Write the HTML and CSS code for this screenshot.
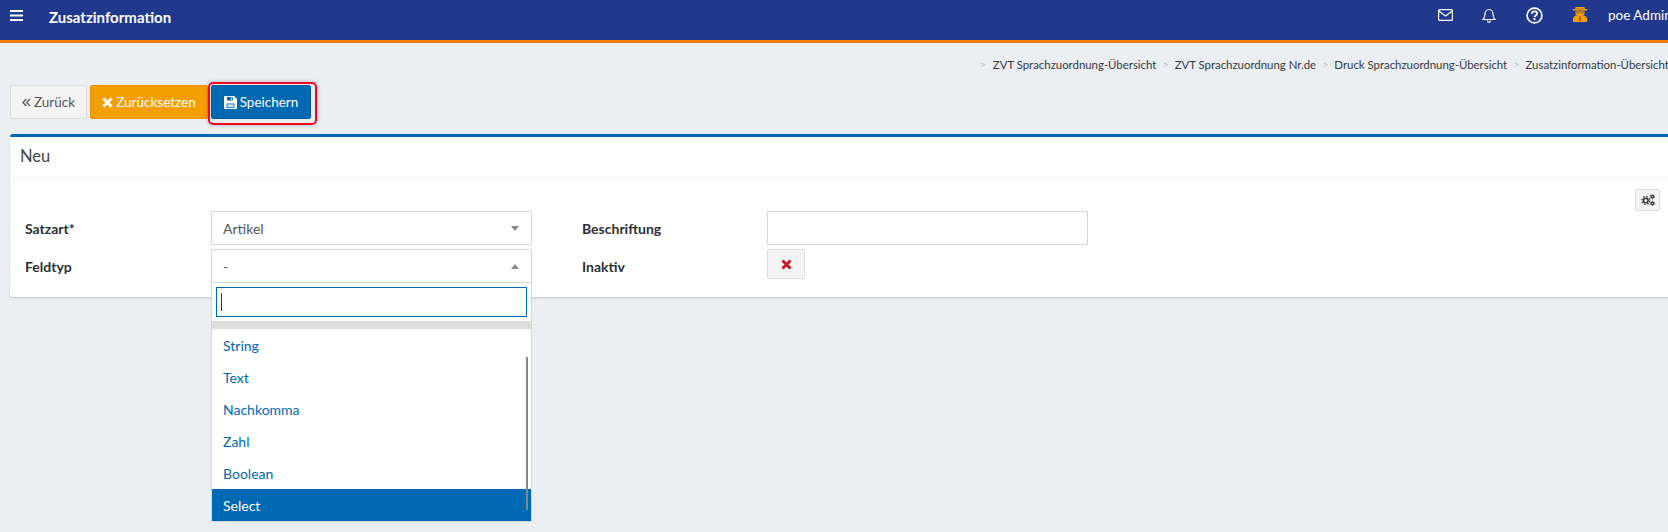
FILE: index.html
```html
<!DOCTYPE html>
<html lang="de">
<head>
    <meta charset="UTF-8">
    <title>Zusatzinformation</title>
    <link rel="stylesheet" href="styles.css">
</head>
<body>
    <div class="topbar">
        <svg class="menu-icon" width="13" height="11" viewBox="0 0 13 11"><path d="M0 0h13v2H0zM0 4.500h13v2H0zM0 9h13v2H0z" fill="#fff"/></svg>
        <span class="page-title">Zusatzinformation</span>
        <div class="topbar-right">
            <svg width="15" height="12" viewBox="0 0 15 12" fill="none" stroke="#fff" stroke-width="1.200"><rect x="0.600" y="0.600" width="13.800" height="10.800" rx="1"/><path d="M0.800 2l6.700 5 6.700-5"/></svg>
            <svg class="icon-bell" width="14" height="15" viewBox="0 0 14 15" fill="none" stroke="#fff" stroke-width="1.200"><path d="M1 11.500c1.500-1.500 2-3 2-5.500 0-2.500 1.700-4.500 4-4.500s4 2 4 4.500c0 2.500.5 4 2 5.500z"/><path d="M5.500 12.500c0 1 .7 1.800 1.500 1.800s1.500-.8 1.500-1.800" /></svg>
            <svg class="icon-help" width="17" height="17" viewBox="0 0 17 17" fill="none" stroke="#fff"><circle cx="8.500" cy="8.500" r="7.400" stroke-width="1.700"/><path d="M5.900 6.700c0-1.500 1.200-2.300 2.600-2.300s2.600.9 2.600 2.200c0 2-2.600 1.900-2.600 3.700" stroke-width="1.800"/><path d="M8.500 11.200v2" stroke-width="2"/></svg>
            <svg class="icon-spy" width="16" height="19" viewBox="0 0 16 19" fill="#f59e00"><path d="M4.500 .5c1.200.6 2.300.8 3.500.8s2.300-.2 3.500-.8l1.300 5.300H3.200z"/><path d="M1 6h14v1.500H1z"/><path d="M3.500 8.200h9v2.300c0 1.200-1 2.100-2.100 2.500H5.600c-1.100-.4-2.100-1.300-2.100-2.500z"/><path d="M4.400 9h3v1.600h-3zM8.600 9h3v1.600h-3z" fill="#a86a00"/><path d="M1 19v-3c0-1.800 1-3 3-3.400h8c2 .4 3 1.600 3 3.400v3z"/><path d="M7.300 13h1.400l.6 4-1.300 2-1.300-2z" fill="#a86a00"/></svg>
            <span class="user-name">poe Admin</span>
        </div>
    </div>

    <div class="breadcrumb">
        <span class="sep">&gt;</span><span class="crumb">ZVT Sprachzuordnung-Übersicht</span>
        <span class="sep">&gt;</span><span class="crumb">ZVT Sprachzuordnung Nr.de</span>
        <span class="sep">&gt;</span><span class="crumb">Druck Sprachzuordnung-Übersicht</span>
        <span class="sep">&gt;</span><span class="crumb">Zusatzinformation-Übersicht</span>
    </div>

    <div class="actions">
        <button class="btn btn-back">
            <svg width="9" height="9" viewBox="0 0 9 9" fill="none" stroke="#555" stroke-width="1.300"><path d="M4.300 1L1 4.500 4.300 8M8 1L4.700 4.500 8 8"/></svg>
            Zurück
        </button>
        <button class="btn btn-reset">
            <svg width="11" height="11" viewBox="0 0 11 11" fill="none" stroke="#fff" stroke-width="3"><path d="M1.500 1.500l8 8M9.500 1.500l-8 8"/></svg>
            Zurücksetzen
        </button>
        <div class="highlight-wrap">
            <button class="btn btn-save">
                <svg width="13" height="13" viewBox="0 0 13 13"><path d="M1 0h9l3 3v9a1 1 0 0 1-1 1H1a1 1 0 0 1-1-1V1a1 1 0 0 1 1-1z" fill="#fff"/><path d="M3 1h6v3.500H3z" fill="#0069b4"/><path d="M7 1.500h1.300v2.300H7z" fill="#fff"/><path d="M2.500 7.500h8V12h-8z" fill="#0069b4"/><path d="M3.300 8.300h6.400v3H3.300z" fill="#cfe0ee"/></svg>
                Speichern
            </button>
            <span class="highlight"></span>
        </div>
    </div>

    <div class="card">
        <div class="card-head">Neu</div>
        <div class="card-body">
            <div class="tools">
                <button class="btn-gear">
                    <svg width="14" height="12" viewBox="0 0 14 12" fill="none" stroke="#333"><circle cx="4.800" cy="6.500" r="2.300" stroke-width="1.500"/><circle cx="4.800" cy="6.500" r="3.900" stroke-width="1.300" stroke-dasharray="1.500 1.560"/><circle cx="11.300" cy="2.600" r="1.300" stroke-width="1.300"/><circle cx="11.300" cy="9.400" r="1.300" stroke-width="1.300"/><circle cx="11.300" cy="2.600" r="2.300" stroke-width=".8" stroke-dasharray="1 1.400"/><circle cx="11.300" cy="9.400" r="2.300" stroke-width=".8" stroke-dasharray="1 1.400"/></svg>
                </button>
            </div>
            <div class="form-row">
                <label class="field-label">Satzart*</label>
                <div class="select-box">
                    <span>Artikel</span>
                    <span class="arrow-down"></span>
                </div>
                <label class="field-label second">Beschriftung</label>
                <input class="text-input" type="text">
            </div>
            <div class="form-row">
                <label class="field-label">Feldtyp</label>
                <div class="select-box open">
                    <span>-</span>
                    <span class="arrow-up"></span>
                    <div class="dropdown">
                        <div class="search-wrap"><div class="search-input"><span class="caret"></span></div></div>
                        <ul class="options">
                            <li class="placeholder"></li>
                            <li>String</li>
                            <li>Text</li>
                            <li>Nachkomma</li>
                            <li>Zahl</li>
                            <li>Boolean</li>
                            <li class="selected">Select</li>
                        </ul>
                        <span class="scrollbar"></span>
                    </div>
                </div>
                <label class="field-label second">Inaktiv</label>
                <button class="btn-toggle">
                    <svg width="11" height="11" viewBox="0 0 11 11" fill="none" stroke="#c01c28" stroke-width="3"><path d="M1.500 1.500l8 8M9.500 1.500l-8 8"/></svg>
                </button>
            </div>
        </div>
    </div>
</body>
</html>
```

FILE: styles.css
```css
* {
    margin: 0;
    padding: 0;
    box-sizing: border-box;
}

html, body {
    height: 100%;
    overflow: hidden;
}

body {
    font-family: Lato, sans-serif;
    font-size: 14px;
    color: #343a40;
    background: #ebeef3;
    width: 1668px;
}

svg {
    flex-shrink: 0;
}

.topbar {
    height: 43px;
    background: #20398d;
    border-bottom: 3px solid #ef7d00;
    display: flex;
    align-items: center;
    padding-left: 10px;
    color: #fff;
}

.menu-icon {
    margin-right: 26px;
    margin-top: -10px;
}

.page-title {
    font-weight: 700;
    font-size: 15px;
    margin-top: -7px;
}

.topbar-right {
    margin-left: auto;
    display: flex;
    align-items: center;
    width: 230px;
    margin-top: -10px;
    overflow: hidden;
    flex-shrink: 0;
}

.icon-bell {
    margin-left: 29px;
}

.icon-help {
    margin-left: 30px;
}

.icon-spy {
    margin-left: 29px;
    margin-top: -6px;
}

.user-name {
    margin-left: 20px;
    white-space: nowrap;
    font-size: 13.500px;
}

.breadcrumb {
    display: flex;
    align-items: center;
    height: 42px;
    padding-left: 980px;
    font-size: 11.400px;
    white-space: nowrap;
    overflow: hidden;
    color: #343a40;
}

.crumb {
    flex-shrink: 0;
}

.sep {
    color: #bbb;
    font-size: 10px;
    margin-right: 6px;
    margin-left: 6.500px;
}

.sep:first-child {
    margin-left: 0;
    margin-right: 7px;
}

.actions {
    display: flex;
    padding-left: 10px;
    gap: 3px;
    height: 34px;
}

.btn {
    display: flex;
    align-items: center;
    justify-content: center;
    gap: 3px;
    height: 34px;
    font-family: inherit;
    font-size: 13.500px;
    border-radius: 2px;
    border: 1px solid #ddd;
}

.btn-back {
    width: 77px;
    background: #f4f4f4;
    color: #555;
}

.btn-reset {
    width: 118px;
    background: #f59e00;
    border-color: #e79500;
    color: #fff;
}

.btn-save {
    width: 100px;
    background: #0069b4;
    border-color: #005a9c;
    color: #fff;
}

.highlight-wrap {
    position: relative;
}

.highlight {
    position: absolute;
    left: -3px;
    right: -6px;
    top: -3px;
    bottom: -6px;
    border: 2px solid #ee0a1f;
    border-radius: 5px;
    box-shadow: 0 0 4px rgba(0, 0, 0, 0.25);
}

.card {
    margin: 15px -20px 0 10px;
    height: 163px;
    background: #fff;
    border-top: 3px solid #0069b4;
    border-radius: 3px;
    box-shadow: 0 1px 2px rgba(0, 0, 0, 0.18);
}

.card-head {
    height: 41px;
    padding: 0 0 2px 10px;
    display: flex;
    align-items: center;
    font-size: 16.500px;
    color: #444;
    border-bottom: 1px solid #f1f1f1;
}

.card-body {
    padding-left: 15px;
}

.tools {
    height: 33px;
    padding: 11px 28px 0 0;
    display: flex;
    justify-content: flex-end;
}

.btn-gear {
    width: 25px;
    height: 22px;
    background: #f4f4f4;
    border: 1px solid #ddd;
    border-radius: 2px;
    display: flex;
    align-items: center;
    justify-content: center;
}

.form-row {
    display: flex;
    align-items: center;
    height: 34px;
    margin-bottom: 4px;
}

.field-label {
    width: 186px;
    font-weight: 700;
    font-size: 14px;
    color: #2b3036;
}

.field-label.second {
    width: 185px;
    margin-left: 50px;
}

.select-box {
    position: relative;
    width: 321px;
    height: 34px;
    padding: 0 11px;
    background: #fff;
    border: 1px solid #d2d6de;
    display: flex;
    align-items: center;
    justify-content: space-between;
    color: #555;
}

.arrow-down, .arrow-up {
    width: 0;
    height: 0;
    border-left: 4px solid transparent;
    border-right: 4px solid transparent;
    margin-right: 1px;
}

.arrow-down {
    border-top: 5px solid #888;
}

.arrow-up {
    border-bottom: 5px solid #888;
}

.text-input {
    width: 321px;
    height: 34px;
    border: 1px solid #d2d6de;
    outline: none;
}

.btn-toggle {
    width: 38px;
    height: 30px;
    align-self: flex-start;
    background: #f4f4f4;
    border: 1px solid #ddd;
    border-radius: 2px;
    display: flex;
    align-items: center;
    justify-content: center;
}

.dropdown {
    position: absolute;
    left: -1px;
    top: 32px;
    width: 321px;
    background: #fff;
    border: 1px solid #d2d6de;
    z-index: 5;
}

.search-wrap {
    padding: 4px;
    height: 38px;
}

.search-input {
    height: 30px;
    border: 1px solid #0069b4;
    display: flex;
    align-items: center;
    padding-left: 4px;
}

.caret {
    width: 1px;
    height: 18px;
    background: #333;
}

.options {
    list-style: none;
}

.options li {
    height: 32px;
    padding-left: 11px;
    display: flex;
    align-items: center;
    color: #0069b4;
}

.options .placeholder {
    height: 8px;
    background: #ddd;
}

.options .selected {
    background: #0069b4;
    color: #fff;
}

.scrollbar {
    position: absolute;
    right: 3px;
    top: 74px;
    width: 2px;
    height: 153px;
    background: #888;
}
```
